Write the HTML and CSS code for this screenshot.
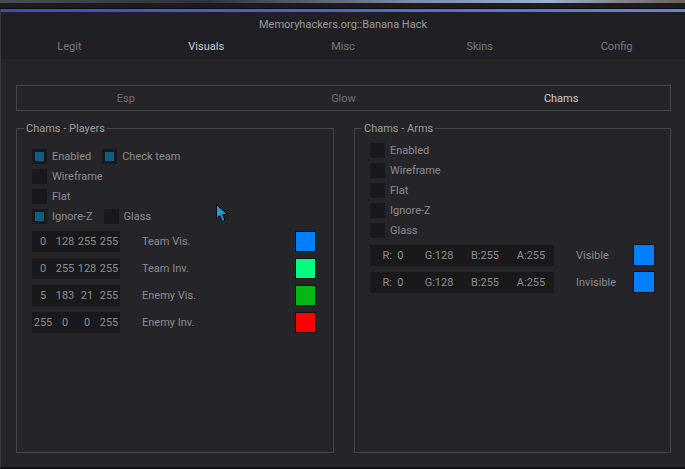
FILE: index.html
```html
<!DOCTYPE html>
<html>
<head>
<meta charset="utf-8">
<link rel="stylesheet" href="styles.css">
</head>
<body>
<div class="desk"></div>
<div class="window">
  <div class="bar"></div>
  <header class="head">
    <div class="title">Memoryhackers.org::Banana Hack</div>
    <nav class="tabs">
      <span>Legit</span>
      <span class="active">Visuals</span>
      <span>Misc</span>
      <span>Skins</span>
      <span>Config</span>
    </nav>
  </header>
  <main class="content">
    <nav class="subtabs">
      <span>Esp</span>
      <span>Glow</span>
      <span class="active">Chams</span>
    </nav>
    <div class="groups">
      <fieldset class="group players">
        <legend>Chams - Players</legend>
        <div class="checks">
          <div class="row">
            <label class="cb"><i class="box on"></i>Enabled</label>
            <label class="cb"><i class="box on"></i>Check team</label>
          </div>
          <div class="row"><label class="cb"><i class="box"></i>Wireframe</label></div>
          <div class="row"><label class="cb"><i class="box"></i>Flat</label></div>
          <div class="row">
            <label class="cb"><i class="box on"></i>Ignore-Z</label>
            <label class="cb"><i class="box"></i>Glass</label>
          </div>
        </div>
        <div class="colors">
          <div class="crow">
            <div class="ints"><span>0</span><span>128</span><span>255</span><span>255</span></div>
            <span class="clabel">Team Vis.</span>
            <span class="swatch" style="background:#0080ff"></span>
          </div>
          <div class="crow">
            <div class="ints"><span>0</span><span>255</span><span>128</span><span>255</span></div>
            <span class="clabel">Team Inv.</span>
            <span class="swatch" style="background:#00ff80"></span>
          </div>
          <div class="crow">
            <div class="ints"><span>5</span><span>183</span><span>21</span><span>255</span></div>
            <span class="clabel">Enemy Vis.</span>
            <span class="swatch" style="background:#05b715"></span>
          </div>
          <div class="crow">
            <div class="ints"><span>255</span><span>0</span><span>0</span><span>255</span></div>
            <span class="clabel">Enemy Inv.</span>
            <span class="swatch" style="background:#ff0000"></span>
          </div>
        </div>
      </fieldset>
      <fieldset class="group arms">
        <legend>Chams - Arms</legend>
        <div class="checks">
          <div class="row"><label class="cb"><i class="box"></i>Enabled</label></div>
          <div class="row"><label class="cb"><i class="box"></i>Wireframe</label></div>
          <div class="row"><label class="cb"><i class="box"></i>Flat</label></div>
          <div class="row"><label class="cb"><i class="box"></i>Ignore-Z</label></div>
          <div class="row"><label class="cb"><i class="box"></i>Glass</label></div>
        </div>
        <div class="colors">
          <div class="crow">
            <div class="rgba"><span>R:  0</span><span>G:128</span><span>B:255</span><span>A:255</span></div>
            <span class="clabel">Visible</span>
            <span class="swatch big" style="background:#0080ff"></span>
          </div>
          <div class="crow">
            <div class="rgba"><span>R:  0</span><span>G:128</span><span>B:255</span><span>A:255</span></div>
            <span class="clabel">Invisible</span>
            <span class="swatch big" style="background:#0080ff"></span>
          </div>
        </div>
      </fieldset>
    </div>
  </main>
  <svg class="cursor" width="13" height="20" viewBox="0 0 13 20">
    <path d="M0.5 0.5 L0.5 14.5 L3.8 11.3 L6.3 17.5 L9 16.4 L6.6 10.5 L11.5 10.5 Z" fill="#1b9ad8" stroke="#000" stroke-width="1"/>
  </svg>
</div>
</body>
</html>
```
FILE: styles.css
```css
* { box-sizing: border-box; }
html, body { margin: 0; padding: 0; }
body {
  width: 685px;
  height: 469px;
  overflow: hidden;
  background: #0e0e10;
  font-family: Roboto, "Liberation Sans", Arial, sans-serif;
  font-size: 11px;
  color: #8a8a8c;
}
.desk {
  height: 9px;
  background:
    linear-gradient(to bottom, transparent 0, transparent 3px, #1c1c1f 3px, #1c1c1f 8px, #0e0e10 8px),
    linear-gradient(to right, #4a4e55 0%, #2f3238 30%, #5a606a 45%, #7c8ba8 60%, #9ab0d0 80%, #6d5f55 100%);
}
.window {
  position: relative;
  height: 459px;
  background: #252529;
  border-left: 1px solid #3a3a3e;
  border-bottom: 1px solid #151517;
}
.bar {
  height: 3px;
  background: linear-gradient(to right, #3a4dbd, #5166c9 50%, #6b83d7);
}
.head {
  background: #202024;
  border-bottom: 1px solid #1c1c1f;
}
.title {
  height: 23px;
  line-height: 23px;
  padding-top: 1px;
  text-align: center;
  color: #9a9a9c;
}
.tabs {
  display: grid;
  grid-template-columns: repeat(5, 1fr);
  height: 23px;
  line-height: 23px;
  text-align: center;
  color: #77777a;
}
.tabs .active, .subtabs .active { color: #cdcdcf; }
.content {
  padding: 26px 14px 0 15px;
}
.subtabs {
  display: grid;
  grid-template-columns: repeat(3, 1fr);
  height: 26px;
  line-height: 24px;
  padding-top: 1px;
  border: 1px solid #46464a;
  text-align: center;
  color: #6f6f72;
}
.groups {
  display: flex;
  gap: 20px;
  margin-top: 11px;
}
.group {
  margin: 0;
  min-width: 0;
  height: 331px;
  border: 1px solid #46464a;
  padding: 0 15px;
}
.group.players { width: 318px; }
.group.arms { width: 317px; }
.group legend {
  margin-left: -8px;
  padding: 0 2px;
  line-height: 13px;
  color: #9c9c9e;
}
.checks {
  display: flex;
  flex-direction: column;
  gap: 5px;
}
.players .checks { padding-top: 14px; }
.arms .checks { padding-top: 8px; }
.row {
  display: flex;
  height: 15px;
  align-items: center;
}
.cb {
  display: flex;
  align-items: center;
  gap: 5px;
  height: 15px;
  line-height: 15px;
  color: #8c8c8e;
}
.cb + .cb { margin-left: 11px; }
.box {
  width: 15px;
  height: 15px;
  background: #19191b;
  display: flex;
  align-items: center;
  justify-content: center;
}
.box.on::after {
  content: "";
  width: 9px;
  height: 9px;
  background: #0f5e86;
}
.colors {
  display: flex;
  flex-direction: column;
  gap: 6px;
}
.players .colors { margin-top: 7px; }
.arms .colors { margin-top: 6px; gap: 5px; }
.crow {
  display: flex;
  align-items: center;
  height: 21px;
}
.arms .crow { height: 22px; }
.ints, .rgba {
  display: grid;
  height: 21px;
  line-height: 21px;
  background: #19191b;
  color: #8c8c8e;
  text-align: center;
  white-space: pre;
}
.ints {
  width: 88px;
  grid-template-columns: repeat(4, 22px);
}
.rgba {
  width: 184px;
  grid-template-columns: repeat(4, 46px);
}
.clabel {
  margin-left: 22px;
  color: #8c8c8e;
}
.swatch {
  margin-left: auto;
  width: 21px;
  height: 21px;
  border: 1px solid #111;
}
.players .swatch { margin-right: 2px; }
.swatch.big {
  width: 22px;
  height: 22px;
  margin-right: 0;
}
.cursor {
  position: absolute;
  left: 215px;
  top: 195px;
}
```
